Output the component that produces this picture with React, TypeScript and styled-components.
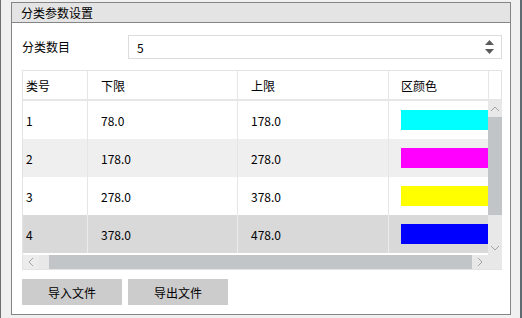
import { createGlobalStyle } from "styled-components";
import styled from "styled-components";

const GlobalStyle = createGlobalStyle`
  html, body {
    margin: 0;
    padding: 0;
    background: #f0f0f0;
  }
  body {
    font-family: "Noto Sans CJK SC", "Noto Sans", sans-serif;
    font-size: 12px;
    color: #000;
  }
`;

const Window = styled.div`
  width: 522px;
  height: 318px;
  box-sizing: border-box;
  background: #f0f0f0;
  border-left: 1px solid #6f6f6f;
  border-right: 2px solid #5e6b70;
  padding: 2px 9px 3px 10px;
  display: flex;
`;

const GroupBox = styled.section`
  flex: 1;
  display: flex;
  flex-direction: column;
  background: #fff;
  border: 1px solid #858585;
`;

const GroupTitle = styled.div`
  height: 19px;
  line-height: 19px;
  background: #e4e4e4;
  border-bottom: 1px solid #858585;
  padding-left: 9px;
`;

const Content = styled.div`
  flex: 1;
  display: flex;
  flex-direction: column;
  padding: 12px 8px 8px 10px;
`;

const FieldRow = styled.div`
  display: flex;
  align-items: center;
  height: 24px;
`;

const Label = styled.span`
  width: 106px;
  line-height: 24px;
`;

const SpinBox = styled.div`
  flex: 1;
  height: 24px;
  box-sizing: border-box;
  border: 1px solid #dcdcdc;
  display: flex;
  align-items: center;
  padding-left: 8px;
`;

const SpinValue = styled.span`
  flex: 1;
`;

const SpinArrows = styled.div`
  width: 24px;
  display: flex;
  flex-direction: column;
  align-items: center;
  gap: 4px;
`;

const Table = styled.div`
  margin-top: 11px;
  display: grid;
  grid-template-columns: 1fr 14px;
  grid-template-rows: 30px 154px 14px;
  border: 1px solid #e3e3e3;
  border-right: none;
  background: #fff;
`;

const Viewport = styled.div`
  overflow: hidden;
`;

const Row = styled.div<{ $bg?: string; $height: number }>`
  display: flex;
  height: ${(p) => p.$height}px;
  background: ${(p) => p.$bg || "#fff"};
  width: max-content;
`;

const HeaderRow = styled(Row)`
  border-bottom: 2px solid #e6e6e6;
`;

const Cell = styled.div<{ $w: number; $pad: number; $line?: string }>`
  width: ${(p) => p.$w}px;
  box-sizing: border-box;
  padding-left: ${(p) => p.$pad}px;
  border-right: 1px solid ${(p) => p.$line || "#e6e6e6"};
  display: flex;
  align-items: center;
  white-space: nowrap;
`;

const Swatch = styled.div<{ $color: string }>`
  width: 110px;
  height: 20px;
  background: ${(p) => p.$color};
`;

const HeaderCorner = styled.div`
  border-left: 1px solid #e6e6e6;
  border-bottom: 2px solid #e6e6e6;
  border-right: 1px solid #e3e3e3;
`;

const VScroll = styled.div`
  display: flex;
  flex-direction: column;
  background: #e8e8e8;
`;

const ScrollBtn = styled.div<{ $size: number; $vertical?: boolean }>`
  ${(p) => (p.$vertical ? "height" : "width")}: ${(p) => p.$size}px;
  flex-shrink: 0;
  display: flex;
  align-items: center;
  justify-content: center;
  background: #e8e8e8;
`;

const VThumb = styled.div`
  height: 98px;
  background: #c1c5c8;
`;

const Track = styled.div`
  flex: 1;
`;

const HScroll = styled.div`
  display: flex;
  background: #e8e8e8;
`;

const HThumb = styled.div`
  flex: 1;
  background: #c1c5c8;
  margin-left: 10px;
`;

const Corner = styled.div`
  background: #e8e8e8;
`;

const ButtonRow = styled.div`
  margin-top: 9px;
  display: flex;
  gap: 6px;
`;

const Button = styled.button`
  width: 100px;
  height: 26px;
  border: none;
  background: #cccccc;
  font-family: inherit;
  font-size: 12px;
  color: #000;
  padding: 0;
`;

const Chevron = ({ dir }: { dir: "up" | "down" | "left" | "right" }) => {
  const paths: Record<string, string> = {
    up: "M1 6 L5 2 L9 6",
    down: "M1 2 L5 6 L9 2",
    left: "M6 1 L2 5 L6 9",
    right: "M2 1 L6 5 L2 9",
  };
  const horiz = dir === "left" || dir === "right";
  return (
    <svg width={horiz ? 8 : 10} height={horiz ? 10 : 8} viewBox={horiz ? "0 0 8 10" : "0 0 10 8"}>
      <path d={paths[dir]} fill="none" stroke="#a3a3a3" strokeWidth="1" />
    </svg>
  );
};

const Triangle = ({ up }: { up?: boolean }) => (
  <svg width="9" height="5" viewBox="0 0 9 5">
    <path d={up ? "M0 5 L4.5 0 L9 5 Z" : "M0 0 L9 0 L4.5 5 Z"} fill="#5a5a5a" />
  </svg>
);

const cols = [65, 150, 151, 130];
const pads = [3, 13, 13, 12];

const rows = [
  { id: "1", low: "78.0", high: "178.0", color: "#00ffff", bg: "#ffffff" },
  { id: "2", low: "178.0", high: "278.0", color: "#ff00ff", bg: "#efefef" },
  { id: "3", low: "278.0", high: "378.0", color: "#ffff00", bg: "#ffffff" },
  { id: "4", low: "378.0", high: "478.0", color: "#0000ff", bg: "#d9d9d9" },
];

export default function App() {
  return (
    <>
      <GlobalStyle />
      <Window>
        <GroupBox>
          <GroupTitle>分类参数设置</GroupTitle>
          <Content>
            <FieldRow>
              <Label>分类数目</Label>
              <SpinBox>
                <SpinValue>5</SpinValue>
                <SpinArrows>
                  <Triangle up />
                  <Triangle />
                </SpinArrows>
              </SpinBox>
            </FieldRow>

            <Table>
              <Viewport>
                <HeaderRow $height={28}>
                  {["类号", "下限", "上限", "区颜色"].map((h, i) => (
                    <Cell key={h} $w={cols[i]} $pad={pads[i]}>
                      {h}
                    </Cell>
                  ))}
                </HeaderRow>
              </Viewport>
              <HeaderCorner />

              <Viewport>
                {rows.map((r) => {
                  const line = r.bg === "#d9d9d9" ? "#ececec" : "#e6e6e6";
                  return (
                    <Row key={r.id} $height={38} $bg={r.bg}>
                      <Cell $w={cols[0]} $pad={pads[0]} $line={line}>{r.id}</Cell>
                      <Cell $w={cols[1]} $pad={pads[1]} $line={line}>{r.low}</Cell>
                      <Cell $w={cols[2]} $pad={pads[2]} $line={line}>{r.high}</Cell>
                      <Cell $w={cols[3]} $pad={pads[3]} $line={line}>
                        <Swatch $color={r.color} />
                      </Cell>
                    </Row>
                  );
                })}
              </Viewport>
              <VScroll>
                <ScrollBtn $size={16} $vertical>
                  <Chevron dir="up" />
                </ScrollBtn>
                <VThumb />
                <Track />
                <ScrollBtn $size={14} $vertical>
                  <Chevron dir="down" />
                </ScrollBtn>
              </VScroll>

              <HScroll>
                <ScrollBtn $size={16} style={{ background: "#ececec" }}>
                  <Chevron dir="left" />
                </ScrollBtn>
                <HThumb />
                <ScrollBtn $size={16}>
                  <Chevron dir="right" />
                </ScrollBtn>
              </HScroll>
              <Corner />
            </Table>

            <ButtonRow>
              <Button>导入文件</Button>
              <Button>导出文件</Button>
            </ButtonRow>
          </Content>
        </GroupBox>
      </Window>
    </>
  );
}
